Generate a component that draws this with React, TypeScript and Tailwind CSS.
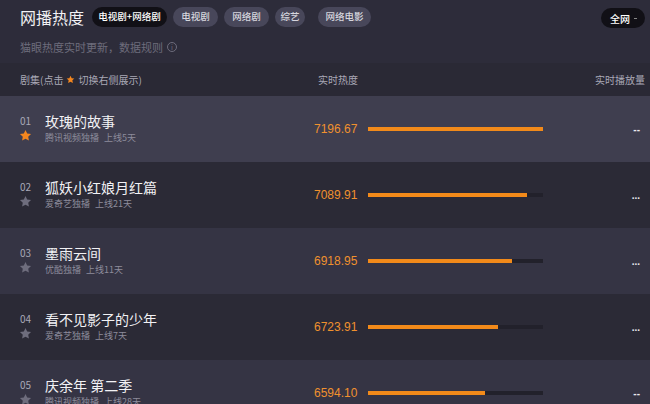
import React from "react";

const FONT = { fontFamily: '"Noto Sans CJK SC", "Noto Sans", sans-serif' };

const tabs = [
  { t: "电视剧+网络剧", w: "w-[75px]" },
  { t: "电视剧", w: "w-[45px]" },
  { t: "网络剧", w: "w-[45px]" },
  { t: "综艺", w: "w-[30px]" },
  { t: "网络电影", w: "w-[53px]" },
];

const rows = [
  { no: "01", name: "玫瑰的故事", meta: "腾讯视频独播", days: "上线5天", heat: "7196.67", pct: 100, play: "--", active: true },
  { no: "02", name: "狐妖小红娘月红篇", meta: "爱奇艺独播", days: "上线21天", heat: "7089.91", pct: 91, play: "...", active: false },
  { no: "03", name: "墨雨云间", meta: "优酷独播", days: "上线11天", heat: "6918.95", pct: 82, play: "...", active: false },
  { no: "04", name: "看不见影子的少年", meta: "爱奇艺独播", days: "上线7天", heat: "6723.91", pct: 74, play: "...", active: false },
  { no: "05", name: "庆余年 第二季", meta: "腾讯视频独播", days: "上线28天", heat: "6594.10", pct: 67, play: "--", active: false },
];

const rowBg = ["bg-[#3f3e4f]", "bg-[#2b2a36]", "bg-[#353444]", "bg-[#2b2a36]", "bg-[#353444]"];

function Star({ on, size = 12 }: { on?: boolean; size?: number }) {
  return (
    <svg width={size} height={size} viewBox="0 0 24 24">
      <path
        d="M12 1.8l3.1 6.6 7.1.9-5.2 4.9 1.3 7.1L12 17.9l-6.3 3.4 1.3-7.1-5.2-4.9 7.1-.9z"
        fill={on ? "#f5871f" : "#6e6d7d"}
      />
    </svg>
  );
}

export default function App() {
  return (
    <div className="w-[650px] h-[404px] overflow-hidden bg-[#2d2c3a] text-white" style={FONT}>
      {/* top */}
      <div className="flex items-center h-[32px] pl-[20px] pr-[5px] pt-[1px]">
        <div className="text-[16px] leading-none text-[#f2f2f5] mr-[8px]">网播热度</div>
        <div className="flex items-center gap-[6px]">
          {tabs.map((tab, i) => (
            <div
              key={tab.t}
              className={`${tab.w} h-[20px] flex items-center justify-center rounded-full text-[9.5px] font-medium whitespace-nowrap ${
                i === 0 ? "bg-[#111016] text-white" : "bg-[#48475a] text-[#d6d6de]"
              } ${i === 4 ? "ml-[7px]" : ""}`}
            >
              {tab.t}
            </div>
          ))}
        </div>
        <div className="ml-auto h-[20px] flex items-center gap-[4px] rounded-full bg-[#111016] pl-[9px] pr-[8px] text-[10px] font-medium text-white mt-[3px]">
          全网
          <span className="w-[3px] h-[1px] bg-[#888]" />
        </div>
      </div>
      <div className="flex items-center gap-[4px] pl-[20px] h-[30px] text-[11px] text-[#6d6c7c]">
        猫眼热度实时更新，数据规则
        <span className="w-[10px] h-[10px] rounded-full border border-[#6d6c7c] text-[7px] leading-none flex items-center justify-center">
          i
        </span>
      </div>

      {/* header */}
      <div className="flex items-center h-[33px] mt-[1px] bg-[#2a2935] text-[10px] text-[#a9a8b6] pl-[20px] pr-[5px]">
        <div className="flex items-center flex-1">
          剧集(点击
          <span className="mx-[3px] flex">
            <Star on size={9} />
          </span>
          切换右侧展示)
        </div>
        <div className="w-[277px]">实时热度</div>
        <div>实时播放量</div>
      </div>

      {/* rows */}
      {rows.map((r, i) => (
        <div key={r.no} className={`flex items-center h-[66px] ${rowBg[i]} pl-[19px] pr-[10px]`}>
          <div className="w-[26px] flex flex-col items-start gap-[3px]">
            <div className="text-[10px] leading-none text-[#a9a8b6] pl-[1px]">{r.no}</div>
            <Star on={r.active} size={13} />
          </div>
          <div className="w-[269px] flex flex-col gap-[3px] -mt-[3px]">
            <div className="text-[14px] leading-[16px] text-[#f2f2f5]">{r.name}</div>
            <div className="flex gap-[5px] text-[9px] leading-[11px] text-[#8d8c9b]">
              <span>{r.meta}</span>
              <span>{r.days}</span>
            </div>
          </div>
          <div className="w-[54px] text-[12px] text-[#f0912e]" style={{ fontFamily: '"Liberation Sans", sans-serif' }}>
            {r.heat}
          </div>
          <div className="w-[175px] h-[4px] bg-[#22212b]">
            <div className="h-full bg-[#f28a1a]" style={{ width: `${r.pct}%` }} />
          </div>
          <div className="ml-auto text-[10px] font-bold text-[#e8e8ee]" style={{ fontFamily: '"Liberation Sans", sans-serif' }}>
            {r.play}
          </div>
        </div>
      ))}
    </div>
  );
}
